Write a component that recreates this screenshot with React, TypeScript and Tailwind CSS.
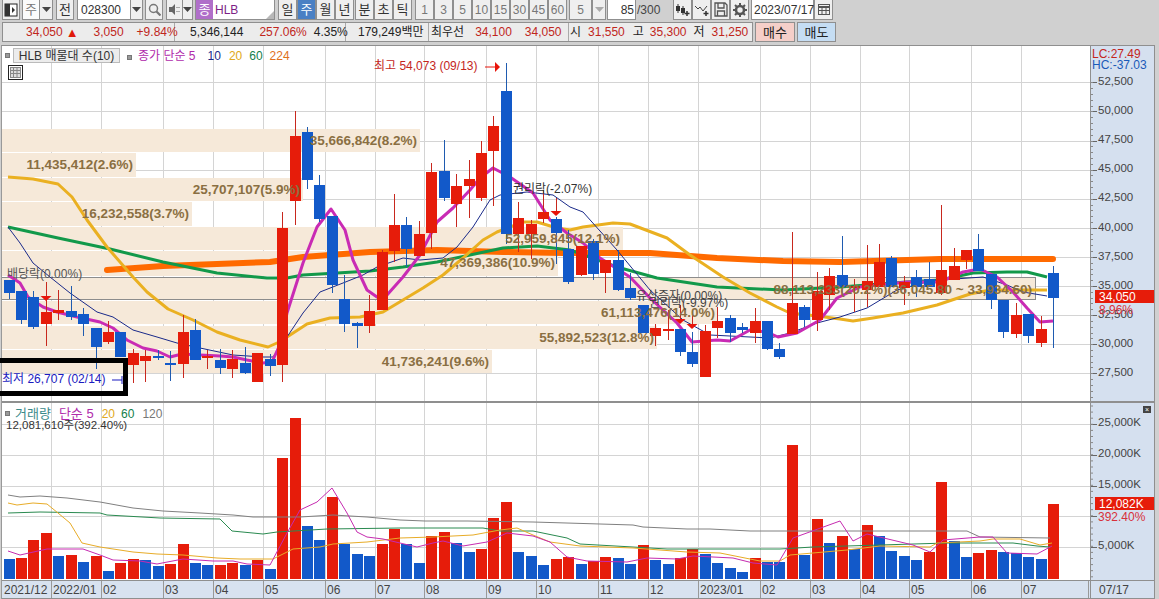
import React from "react";

type C = [string, number, number, number, number];
const candles: C[] = [
  ["B",280,293,280,299],["B",291,320,291,324],["B",297,327,291,329],["R",312,324,282,346],["R",310,313,290,320],
  ["B",311,317,286,320],["B",314,324,308,336],["B",328,347,328,369],["R",332,342,321,344],["B",332,357,332,357],
  ["R",353,365,349,383],["R",356,361,350,382],["B",356,358,350,360],["B",363,365,351,381],["R",332,364,315,378],
  ["B",330,360,319,360],["R",356,358,350,369],["B",360,368,349,374],["R",359,369,350,378],["B",363,373,347,374],
  ["R",353,382,353,382],["B",359,366,354,376],["R",228,365,212,382],["R",136,201,111,225],["B",132,180,127,189],
  ["B",185,219,175,222],["B",216,285,216,293],["B",299,324,275,332],["B",323,326,322,348],["R",311,326,295,333],
  ["R",252,310,250,310],["R",225,251,194,262],["B",225,249,217,267],["R",234,256,221,256],["R",172,233,163,249],
  ["B",171,198,140,201],["R",186,204,174,227],["R",179,186,160,218],["R",153,198,141,201],["R",126,151,116,206],
  ["B",91,234,63,244],["R",218,234,202,252],["R",224,234,220,259],["R",212,219,190,223],["B",219,233,217,264],
  ["B",249,282,230,284],["R",246,275,246,276],["B",241,274,239,280],["R",260,273,260,293],["B",260,290,250,291],
  ["B",288,298,273,300],["B",305,333,305,333],["R",328,336,324,346],["R",329,331,310,340],["B",329,352,329,356],
  ["B",352,364,332,367],["R",331,377,325,377],["R",321,328,307,338],["B",318,333,315,342],["B",327,330,323,333],
  ["R",321,333,308,343],["B",321,349,321,350],["B",349,357,343,359],["R",303,334,232,334],["B",307,320,305,327],
  ["R",291,320,272,331],["R",276,295,268,310],["B",275,287,236,293],["R",286,288,279,312],["R",281,290,245,307],
  ["R",262,287,244,287],["B",258,287,256,287],["R",282,288,276,305],["B",277,287,270,297],["B",279,287,262,287],
  ["R",270,293,205,295],["R",266,280,248,280],["R",250,260,250,269],["B",249,271,234,271],["B",274,300,274,309],
  ["B",300,332,300,338],["R",315,334,303,338],["B",314,336,314,343],["R",329,343,316,347],["B",273,298,266,348],
];

const vols: [string, number][] = [
  ["B",477],["R",474],["R",420],["R",399],["B",468],["R",465],["B",486],["R",468],["B",513],["R",489],
  ["R",477],["B",480],["B",498],["R",492],["R",432],["B",489],["B",495],["R",495],["R",489],["B",495],
  ["R",480],["B",507],["R",174],["R",54],["B",378],["B",420],["R",291],["B",432],["B",462],["B",468],
  ["R",432],["R",387],["B",432],["B",489],["R",408],["R",396],["B",429],["B",456],["R",447],["R",354],
  ["R",306],["B",456],["B",468],["B",495],["R",477],["R",471],["B",492],["R",483],["R",471],["B",474],
  ["B",492],["R",435],["B",480],["B",492],["R",474],["R",447],["B",462],["B",489],["B",504],["B",516],
  ["R",474],["B",486],["B",486],["R",135],["B",465],["R",357],["B",429],["R",408],["B",447],["R",375],
  ["B",408],["B",453],["B",468],["B",480],["R",456],["R",246],["B",423],["B",471],["R",459],["R",450],
  ["B",456],["B",459],["B",471],["B",477],["R",312],
];

const cx = (i: number) => Math.round(8.5 + 12.435 * i);
const RED = "#e61c0a";
const BLUE = "#1259c9";

const yellow = "8,177 33,179 58,184 72,197 87,220 107,247 133,277 147,292 168,309 193,320 217,332 240,340 268,347 277,343 287,337 307,324 330,318 360,317 383,312 403,300 423,288 443,275 463,258 483,240 497,232 523,222 537,222 557,228 570,230 583,227 613,223 630,224 667,238 690,255 723,277 750,293 777,307 790,313 817,316 840,319 853,321 873,318 903,313 937,305 970,294 990,290 1013,290 1033,290 1047,290";
const green = "8,227 58,238 110,249 163,262 217,273 267,278 287,278 303,275 337,273 370,271 403,267 437,262 470,255 503,248 537,246 570,250 617,267 657,278 717,287 783,290 840,287 907,282 940,280 973,273 1007,272 1027,272 1047,277";
const orange = "107,270 163,266 217,264 270,262 303,257 370,252 437,250 503,252 563,253 650,253 717,258 783,261 840,262 907,260 940,259 1053,259";
const magenta = "8,275 20,283 28,297 43,307 57,312 77,317 100,322 113,328 127,340 143,348 157,351 170,357 182,354 200,355 220,356 233,357 247,360 263,363 272,362 282,340 287,313 303,263 317,227 331,209 345,230 353,260 367,290 377,297 387,295 403,277 420,255 437,222 453,208 470,190 480,178 493,168 510,177 533,193 550,220 567,233 583,243 600,258 630,277 650,298 677,323 692,342 717,340 730,341 750,330 767,332 778,337 797,333 820,320 837,298 860,287 907,282 940,282 963,272 980,269 997,277 1013,292 1027,308 1040,322 1053,321";
const navy = "8,227 20,243 33,263 50,277 70,293 97,312 113,317 133,330 157,337 177,343 200,348 233,355 263,357 273,357 287,337 303,313 320,292 343,283 363,275 377,267 403,258 420,260 443,258 457,247 473,227 490,200 500,195 527,192 553,195 570,207 583,212 617,250 650,290 683,320 710,335 770,338 790,333 817,323 840,317 867,308 897,290 923,283 940,280 983,277 1007,285 1023,292 1047,296";

const vGray = "8,495 20,497 40,496 67,498 100,502 133,508 163,511 200,513 233,515 253,517 300,517 333,515 367,517 400,520 425,521 467,521 533,522 600,524 633,525 643,527 687,529 710,529 750,531 800,531 880,531 967,531 980,537 1050,538";
const vGreen = "8,513 40,512 100,513 107,515 160,518 220,519 232,531 263,534 277,532 327,529 400,528 483,528 500,531 533,531 567,538 580,544 633,547 667,549 780,549 813,547 880,545 947,543 1013,543 1037,546 1050,547";
const vYellow = "8,503 17,505 33,503 47,504 58,513 70,523 82,543 100,547 133,552 157,554 183,555 217,558 240,559 273,559 293,549 320,547 333,544 367,542 400,538 433,537 473,535 500,530 517,528 533,535 550,542 580,546 633,548 687,552 720,553 760,561 780,561 790,555 847,550 880,546 930,547 937,543 980,541 993,539 1020,539 1040,545 1052,543";
const vMagenta = "8,551 20,555 47,549 83,549 100,555 113,560 140,561 157,564 183,559 213,561 233,561 247,564 270,565 287,533 300,510 317,502 332,488 347,513 357,532 367,537 383,539 400,543 417,547 433,543 443,541 463,546 487,542 507,533 533,536 550,542 567,557 587,561 627,562 647,558 677,559 693,556 733,558 753,563 777,565 780,560 793,538 840,521 853,541 867,534 913,545 930,552 943,540 980,537 993,537 1007,553 1037,554 1052,546";

const vGrid = [51, 101, 163, 213, 263, 325, 375, 424, 486, 536, 598, 648, 698, 760, 810, 860, 909, 971, 1021];
const priceTicks = ["52,500","50,000","47,500","45,000","42,500","40,000","37,500","35,000","32,500","30,000","27,500"];
const volGridY = [424, 455, 486, 516, 547];

const bands: [number, number, number, string][] = [
  [129, 152, 420, "35,666,842(8.2%)"],
  [153, 177, 136, "11,435,412(2.6%)"],
  [178, 201, 303, "25,707,107(5.9%)"],
  [202, 226, 192, "16,232,558(3.7%)"],
  [227, 250, 623, "52,959,845(12.1%)"],
  [251, 276, 558, "47,369,386(10.9%)"],
  [278, 299, 1035, "88,113,233(20.2%)(36,045.80 ~ 33,934.60)"],
  [301, 324, 718, "61,113,476(14.0%)"],
  [326, 349, 657, "55,892,523(12.8%)"],
  [350, 373, 492, "41,736,241(9.6%)"],
];

const xLabels: [string, number][] = [
  ["2021/12",50],["2022/01",50],["02",62],["03",50],["04",50],["05",62],["06",50],["07",49],["08",62],["09",50],
  ["10",62],["11",50],["12",50],["2023/01",62],["02",50],["03",50],["04",49],["05",62],["06",50],["07",67],
];

const Btn = ({ className = "", children }: { className?: string; children?: React.ReactNode }) => (
  <div className={`h-[20px] shrink-0 flex items-center justify-center border border-t-0 border-[#8f8f8f] bg-[#efefef] text-[#333] text-[13px] ${className}`}>
    {children}
  </div>
);

const Caret = ({ color = "#444" }: { color?: string }) => (
  <svg width="9" height="5" viewBox="0 0 9 5"><path d="M0 0h9L4.500 5z" fill={color} /></svg>
);

const Arrow = ({ x, y }: { x: number; y: number }) => (
  <polygon points={`${x - 5.500},${y} ${x + 5.500},${y} ${x},${y + 5}`} fill="#e8140a" />
);

const Square = () => <span className="w-[5px] h-[5px] bg-[#999] border border-[#777] inline-block shrink-0" />;

export default function App() {
  return (
    <div className="w-[1159px] h-[599px] bg-[#d0d0d0] overflow-hidden flex flex-col font-['Liberation_Sans','Noto_Sans_CJK_KR',sans-serif] text-[12px] leading-none">
      {/* toolbar 1 */}
      <div className="h-[22px] flex items-start pl-[2px] shrink-0">
        <Btn className="w-[18px]">
          <svg width="14" height="14" viewBox="0 0 14 14"><rect x="1" y="1" width="12" height="12" fill="#fff" stroke="#222" /><rect x="1" y="1" width="5" height="12" fill="#333" /><path d="M8 4l3 3-3 3z" fill="#333" /></svg>
        </Btn>
        <Btn className="w-[18px] ml-[2px] !bg-[#fbfbfb] !text-[#777]">주</Btn>
        <Btn className="w-[13px] border-l-0"><Caret /></Btn>
        <Btn className="w-[18px] ml-[3px]">전</Btn>
        <Btn className="w-[54px] ml-[3px] !bg-white !justify-start pl-[3px] !text-[12px]">028300</Btn>
        <Btn className="w-[12px] border-l-0"><Caret /></Btn>
        <Btn className="w-[18px] ml-[2px]">
          <svg width="13" height="13" viewBox="0 0 13 13" fill="none" stroke="#777" strokeWidth="1.500"><circle cx="5.500" cy="5.500" r="4" /><path d="M8.500 8.500L12.500 12.500" strokeWidth="2.200" /></svg>
        </Btn>
        <Btn className="w-[17px] ml-[3px]">
          <svg width="13" height="13" viewBox="0 0 13 13"><path d="M1 4h3l3-3v11L4 9H1z" fill="#666" /><path d="M9 4v1M9 8v1M11 4v1M11 8v1" stroke="#666" /></svg>
        </Btn>
        <Btn className="w-[10px] border-l-0"><Caret /></Btn>
        <div className="w-[80px] h-[20px] ml-[2px] shrink-0 relative flex items-center bg-white border border-t-0 border-[#8f8f8f]">
          <span className="w-[17px] h-[19px] bg-[#b06fc9] text-white text-[13px] flex items-center justify-center">종</span>
          <span className="ml-[2px] text-[#7d1f86] text-[12px]">HLB</span>
          <svg className="absolute right-0 bottom-0" width="8" height="8" viewBox="0 0 8 8"><path d="M8 0v8H0z" fill="#b8b8b8" /></svg>
        </div>
        <div className="flex ml-[3px]">
          <Btn className="w-[19px]">일</Btn>
          <Btn className="w-[19px] !bg-[#4a80c4] !text-white">주</Btn>
          <Btn className="w-[19px]">월</Btn>
          <Btn className="w-[19px]">년</Btn>
        </div>
        <div className="flex ml-[1px]">
          <Btn className="w-[19px]">분</Btn>
          <Btn className="w-[19px]">초</Btn>
          <Btn className="w-[19px]">틱</Btn>
        </div>
        <div className="flex ml-[3px]">
          {["1", "3", "5", "10", "15", "30", "45", "60"].map((t) => (
            <Btn key={t} className="w-[19px] !text-[#777] !text-[12px]">{t}</Btn>
          ))}
        </div>
        <Btn className="w-[23px] ml-[2px] !text-[#777] !text-[12px]">5</Btn>
        <Btn className="w-[14px]"><Caret color="#aaa" /></Btn>
        <Btn className="w-[29px] ml-[1px] !bg-white !justify-end pr-[1px] !text-[12px]">85</Btn>
        <span className="w-[35px] h-[20px] shrink-0 flex items-center pl-[1px] text-[#444]">/300</span>
        <div className="flex ml-[2px]">
          <Btn className="w-[19px]">
            <svg width="15" height="14" viewBox="0 0 15 14"><path d="M3 1v9M8 3v9" stroke="#333" /><rect x="1" y="3" width="4" height="5" fill="#333" /><rect x="6" y="5" width="4" height="5" fill="#333" /><path d="M12 8v5M9.500 10.500h5" stroke="#333" strokeWidth="1.500" /></svg>
          </Btn>
          <Btn className="w-[19px]">
            <svg width="15" height="14" viewBox="0 0 15 14" fill="none"><path d="M1 3l3 3 2-2 3 4 4-5" stroke="#444" /><path d="M12 8v5M9.500 10.500h5" stroke="#333" strokeWidth="1.500" /></svg>
          </Btn>
          <Btn className="w-[19px]">
            <svg width="14" height="15" viewBox="0 0 14 15" fill="none" stroke="#555" strokeWidth="1.300"><path d="M1 1h10l2 2v11H1z" /><path d="M4 1v5h6V1M3.500 14V9h7v5" /></svg>
          </Btn>
          <Btn className="w-[19px]">
            <svg width="14" height="14" viewBox="0 0 14 14"><circle cx="7" cy="7" r="4" fill="none" stroke="#555" strokeWidth="2.600" /><path d="M7 0v3M7 11v3M0 7h3M11 7h3M2 2l2 2M10 10l2 2M2 12l2-2M10 4l2-2" stroke="#555" strokeWidth="2" /></svg>
          </Btn>
        </div>
        <Btn className="w-[63px] ml-[2px] !bg-white !text-[12px] !justify-start pl-[2px]">2023/07/17</Btn>
        <Btn className="w-[19px]">
          <svg width="12" height="11" viewBox="0 0 12 11" fill="none" stroke="#555"><rect x=".5" y=".5" width="11" height="10" /><path d="M0 3h12" strokeWidth="2" /><path d="M4 3v8M8 3v8M0 6.500h12" /></svg>
        </Btn>
      </div>

      {/* toolbar 2 */}
      <div className="h-[23px] shrink-0 pl-[2px] flex items-start text-[12px]">
        <div className="h-[20px] flex border border-[#8f8f8f] bg-[#ececec]">
          <div className="w-[172px] flex items-center border-r border-[#aaa] text-[#c0261c]">
            <span className="ml-[23px]">34,050</span>
            <span className="ml-[3px] text-[#e01a0a] text-[13px]">▲</span>
            <span className="ml-[15px]">3,050</span>
            <span className="ml-[13px]">+9.84%</span>
          </div>
          <div className="w-[171px] flex items-center border-r border-[#aaa] text-[#222]">
            <span className="ml-[15px]">5,346,144</span>
            <span className="ml-[16px] text-[#c0261c]">257.06%</span>
            <span className="ml-[7px]">4.35%</span>
          </div>
          <div className="w-[83px] flex items-center border-r border-[#aaa] text-[#222]">
            <span className="ml-[12px]">179,249백만</span>
          </div>
          <div className="w-[140px] flex items-center border-r border-[#aaa]">
            <span className="ml-[2px] text-[#222]">최우선</span>
            <span className="ml-[11px] text-[#c0261c]">34,100</span>
            <span className="ml-[13px] text-[#c0261c]">34,050</span>
          </div>
          <div className="w-[183px] flex items-center">
            <span className="ml-[1px] text-[#222]">시</span>
            <span className="ml-[7px] text-[#c0261c]">31,550</span>
            <span className="ml-[8px] text-[#222]">고</span>
            <span className="ml-[6px] text-[#c0261c]">35,300</span>
            <span className="ml-[7px] text-[#222]">저</span>
            <span className="ml-[7px] text-[#c0261c]">31,250</span>
          </div>
        </div>
        <div className="w-[40px] h-[20px] ml-[2px] flex items-center justify-center bg-[#f5cfc9] border border-[#8f8f8f] text-[#222] text-[13px]">매수</div>
        <div className="w-[39px] h-[20px] ml-[2px] flex items-center justify-center bg-[#c5ddf3] border border-[#8f8f8f] text-[#222] text-[13px]">매도</div>
      </div>

      {/* chart area */}
      <div className="flex pl-[1px] pr-[4px] flex-1 min-h-0">
        <div className="w-[1089px] flex flex-col border-l border-[#999] border-t border-t-[#8f8f8f] relative">
          {/* price panel */}
          <div className="h-[357px] relative bg-white border-b-2 border-[#8f8f8f] shrink-0">
            <svg width="1088" height="355" viewBox="2 46 1088 355" className="block">
              {Array.from({ length: 11 }).map((_, k) => (
                <line key={k} x1="2" x2="1090" y1={Math.round(82.300 + 29.100 * k) + 0.500} y2={Math.round(82.300 + 29.100 * k) + 0.500} stroke="#d4d4d4" />
              ))}
              {vGrid.map((x) => <line key={x} x1={x + 0.500} x2={x + 0.500} y1="46" y2="402" stroke="#d4d4d4" />)}
              {bands.map(([t, b, r]) => <rect key={t} x="2" y={t} width={r - 2} height={b - t} fill="#f6e9d9" />)}
              <line x1="2" x2="1035" y1="277.500" y2="277.500" stroke="#8c8c8c" />
              <line x1="2" x2="1035" y1="299.500" y2="299.500" stroke="#8c8c8c" />
              <line x1="1035.500" x2="1035.500" y1="277" y2="300" stroke="#8c8c8c" />
              <polyline points={orange} fill="none" stroke="#ff6a00" strokeWidth="6" strokeLinecap="round" strokeLinejoin="round" />
              <polyline points={green} fill="none" stroke="#12994a" strokeWidth="3" strokeLinejoin="round" />
              <polyline points={yellow} fill="none" stroke="#eab021" strokeWidth="3" strokeLinejoin="round" />
              <polyline points={navy} fill="none" stroke="#1a2a8a" strokeWidth="1" strokeLinejoin="round" />
              <polyline points={magenta} fill="none" stroke="#c92bb4" strokeWidth="3" strokeLinejoin="round" />
              {candles.map(([c, t, b, wt, wb], i) => {
                const x = cx(i);
                return (
                  <g key={i}>
                    <line x1={x + 0.500} x2={x + 0.500} y1={wt} y2={wb} stroke={c === "R" ? "#c8281e" : "#1f5bb0"} />
                    <rect x={x - 5} y={t} width="11" height={b - t} fill={c === "R" ? RED : BLUE} />
                  </g>
                );
              })}
              <line x1="46.500" x2="46.500" y1="282" y2="296" stroke="#c8281e" />
              <Arrow x={46} y={296} />
              <line x1="556.500" x2="556.500" y1="198" y2="211" stroke="#c8281e" />
              <Arrow x={556} y={211} />
              <line x1="680.500" x2="680.500" y1="305" y2="320" stroke="#c8281e" />
              <Arrow x={680} y={319} />
              <line x1="692.500" x2="692.500" y1="310" y2="325" stroke="#c8281e" />
              <Arrow x={692} y={324} />
              {bands.map(([t, , r, s]) => (
                <text key={s} x={r - 3} y={t + 16} textAnchor="end" fontWeight="700" className="text-[13.500px]" fill="#8a6f42">{s}</text>
              ))}
              <text x="7" y="278" className="text-[12px]" fill="#555">배당락(0.00%)</text>
              <text x="513" y="193" className="text-[12px]" fill="#333">권리락(-2.07%)</text>
              <text x="636" y="300" className="text-[12px]" fill="#444">유상증자(0.00%)</text>
              <text x="649" y="307" className="text-[12px]" fill="#444">권리락(-9.97%)</text>
              <text x="374" y="70" className="text-[12px]" fill="#c4261c">최고 54,073 (09/13)</text>
              <path d="M485 67h12" stroke="#e8140a" />
              <path d="M495 62l5 5-5 5z" fill="#e8140a" />
              <text x="2" y="383" className="text-[12px]" fill="#1a1ac0">최저 26,707 (02/14)</text>
              <path d="M112 380h10M122 376v8" stroke="#1a1ac0" />
            </svg>
            {/* legend */}
            <div className="absolute left-[3px] top-[2px] flex items-center">
              <Square />
              <span className="ml-[3px] h-[15px] w-[107px] flex items-center justify-center bg-[#ececec] border border-[#bbb] text-[#333] text-[12px]">HLB 매물대 수(10)</span>
              <span className="ml-[7px]"><Square /></span>
              <span className="ml-[6px] text-[#b02bab]">종가 단순 5</span>
              <span className="ml-[12px] text-[#1a2a8a]">10</span>
              <span className="ml-[8px] text-[#e0a820]">20</span>
              <span className="ml-[7px] text-[#12804a]">60</span>
              <span className="ml-[7px] text-[#e0701c]">224</span>
            </div>
            <div className="absolute left-[6px] top-[19px] w-[15px] h-[15px] border border-[#222] bg-white flex items-center justify-center">
              <svg width="11" height="11" viewBox="0 0 11 11" fill="none" stroke="#888"><rect x=".5" y=".5" width="10" height="10" fill="#ddd" /><path d="M0 3.500h11M0 6.500h11M3.500 0v11M7 0v11" /></svg>
            </div>
            {/* low marker box */}
            <div className="absolute left-[-2px] top-[312px] w-[128px] h-[38px] border-[5px] border-l-0 border-black" />
          </div>

          {/* volume panel */}
          <div className="h-[177px] relative bg-white shrink-0">
            <svg width="1088" height="177" viewBox="2 403 1088 177" className="block">
              {volGridY.map((y) => <line key={y} x1="2" x2="1090" y1={y + 0.500} y2={y + 0.500} stroke="#d4d4d4" />)}
              {vGrid.map((x) => <line key={x} x1={x + 0.500} x2={x + 0.500} y1="403" y2="580" stroke="#d4d4d4" />)}
              {vols.map(([c, z], i) => {
                const t = Math.round(400 + z / 3);
                return <rect key={i} x={cx(i) - 5} y={t} width="11" height={579 - t} fill={c === "R" ? RED : BLUE} />;
              })}
              <polyline points={vGray} fill="none" stroke="#808080" />
              <polyline points={vGreen} fill="none" stroke="#2a8a50" />
              <polyline points={vYellow} fill="none" stroke="#e8ac28" />
              <polyline points={vMagenta} fill="none" stroke="#c62bb0" />
            </svg>
            <div className="absolute left-[3px] top-[4px] flex items-center text-[13px]">
              <Square />
              <span className="ml-[5px] text-[#3a8a8a]">거래량</span>
              <span className="ml-[8px] text-[#b02bab]">단순 5</span>
              <span className="ml-[8px] text-[#e0a820] text-[12px]">20</span>
              <span className="ml-[6px] text-[#12804a] text-[12px]">60</span>
              <span className="ml-[8px] text-[#777] text-[12px]">120</span>
            </div>
            <div className="absolute left-[4px] top-[17px] text-[#333] text-[11.500px]">12,081,610주(392.40%)</div>
          </div>

          {/* x axis */}
          <div className="h-[19px] flex bg-[#d8e2f0] border-y border-[#8f8f8f] text-[#444] shrink-0">
            {xLabels.map(([t, w], i) => (
              <div key={i} className="h-full flex items-center pl-[1px] border-r border-[#999] first:pl-[2px]" style={{ width: w }}>{t}</div>
            ))}
          </div>
        </div>

        {/* right axis */}
        <div className="w-[65px] flex flex-col bg-[#d5e0ef] border-l border-[#8f8f8f] border-t border-t-[#8f8f8f] border-r border-r-[#8f8f8f] relative">
          <div className="h-[357px] relative border-b-2 border-[#8f8f8f] shrink-0">
            <div className="absolute left-[1px] top-[2px] text-[#c4261c] text-[12px]">LC:27.49</div>
            <div className="absolute left-[1px] top-[13px] text-[#1a5ab8] text-[12px]">HC:-37.03</div>
            <svg width="8" height="355" viewBox="0 46 8 355" className="block absolute left-0 top-0">
              {Array.from({ length: 11 }).map((_, k) => (
                <line key={k} x1="0" x2="6" y1={Math.round(82.300 + 29.100 * k) + 0.500} y2={Math.round(82.300 + 29.100 * k) + 0.500} stroke="#666" />
              ))}
              {Array.from({ length: 60 }).map((_, k) => (
                <line key={k} x1="0" x2="2" y1={Math.round(82.300 + 5.820 * k) + 0.500} y2={Math.round(82.300 + 5.820 * k) + 0.500} stroke="#888" />
              ))}
            </svg>
            {priceTicks.map((t, k) => (
              <div key={t} className="absolute left-[7px] text-[#444] text-[11.500px]" style={{ top: Math.round(30 + 29.100 * k) }}>{t}</div>
            ))}
            <div className="absolute left-[4px] top-[244px] w-[59px] h-[13px] bg-[#e61c0a] text-white flex items-center pl-[4px]">34,050</div>
            <div className="absolute left-[8px] top-[258px] text-[#d8303a]">8.96%</div>
          </div>
          <div className="h-[177px] relative shrink-0">
            <svg width="8" height="177" viewBox="0 403 8 177" className="block absolute left-0 top-0">
              {volGridY.map((y) => <line key={y} x1="0" x2="6" y1={y + 0.500} y2={y + 0.500} stroke="#666" />)}
              {Array.from({ length: 30 }).map((_, k) => (
                <line key={k} x1="0" x2="2" y1={406 + 6.100 * k} y2={406 + 6.100 * k} stroke="#888" />
              ))}
            </svg>
            <div className="absolute right-[3px] top-[3px] w-[8px] h-[7px] bg-[#444] text-white flex items-center justify-center text-[7px]">×</div>
            <div className="absolute left-[7px] top-[14px] text-[#444] text-[11.500px]">25,000K</div>
            <div className="absolute left-[7px] top-[45px] text-[#444] text-[11.500px]">20,000K</div>
            <div className="absolute left-[7px] top-[76px] text-[#444] text-[11.500px]">15,000K</div>
            <div className="absolute left-[7px] top-[137px] text-[#444] text-[11.500px]">5,000K</div>
            <div className="absolute left-[4px] top-[94px] w-[59px] h-[13px] bg-[#e61c0a] text-white flex items-center pl-[4px]">12,082K</div>
            <div className="absolute left-[7px] top-[108px] text-[#d8303a]">392.40%</div>
          </div>
          <div className="h-[19px] flex items-center pl-[8px] border-y border-[#8f8f8f] text-[#444] shrink-0">07/17</div>
        </div>
      </div>
    </div>
  );
}
